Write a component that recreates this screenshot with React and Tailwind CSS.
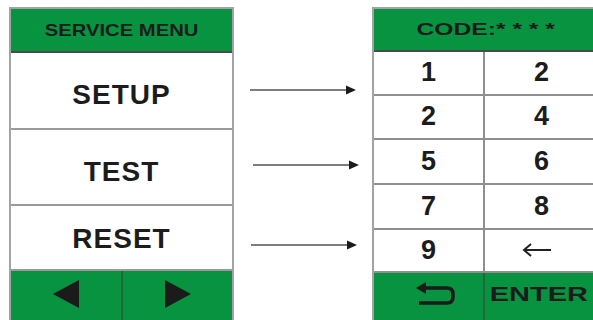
import React from 'react';

const GREEN = 'bg-[#07933f]';

// arrow from menu item to keypad
const Arrow = ({ className }) => (
    <svg width="108" height="10" viewBox="0 0 108 10" className={className}>
        <line x1="0" y1="5" x2="98" y2="5" stroke="#7d7d7d" strokeWidth="2" />
        <polygon points="96,0.5 106,5 96,9.5" fill="#1b1b1b" />
    </svg>
);

const MenuRow = ({ label, h, pad }) => (
    <div className={`flex items-center justify-center border-b-2 border-[#9a9a9a] ${h} ${pad}`}>
        <span className="text-[28px] font-bold tracking-[1px] text-[#1c1c1c] leading-none">{label}</span>
    </div>
);

const Key = ({ children, h, right }) => (
    <div className={`flex items-center justify-center border-b-2 border-[#8f8f8f] ${h} ${right ? '' : 'border-r-2'}`}>
        {children}
    </div>
);

const Digit = ({ n }) => (
    <span className="text-[27px] font-bold text-[#1c1c1c] leading-none">{n}</span>
);

export default function App() {
    const rows = [
        ['1', '2', 'h-[44px]'],
        ['2', '4', 'h-[44px]'],
        ['5', '6', 'h-[45px]'],
        ['7', '8', 'h-[45px]'],
    ];

    return (
        <div className="w-[593px] h-[320px] overflow-hidden bg-white flex font-['Liberation_Sans',Arial,sans-serif]">
            {/* --- LEFT: SERVICE MENU --- */}
            <div className="ml-[9px] mt-[7px] w-[225px] shrink-0 flex flex-col border-2 border-b-0 border-[#a3a3a3]">
                <div className={`${GREEN} h-[45px] flex items-center justify-center border-b-2 border-[#4a4a4a]`}>
                    <span className="inline-block scale-x-[1.19] text-[17px] font-bold text-[#1c1c1c] leading-none">SERVICE MENU</span>
                </div>
                <MenuRow label="SETUP" h="h-[78px]" pad="pt-[9px]" />
                <MenuRow label="TEST" h="h-[76px]" pad="pt-[11px]" />
                <MenuRow label="RESET" h="h-[66px]" pad="pt-[4px]" />
                <div className={`${GREEN} h-[50px] grid grid-cols-[112px_1fr]`}>
                    <div className="flex items-center justify-center border-r-2 border-[#22673a] pb-[2px]">
                        <svg width="26" height="28" viewBox="0 0 26 28"><polygon points="0,14 26,0 26,28" fill="#1b1b1b" /></svg>
                    </div>
                    <div className="flex items-center justify-center pb-[2px]">
                        <svg width="26" height="28" viewBox="0 0 26 28"><polygon points="0,0 26,14 0,28" fill="#1b1b1b" /></svg>
                    </div>
                </div>
            </div>

            {/* --- MIDDLE: arrows --- */}
            <div className="w-[138px] shrink-0 flex flex-col pl-[16px]">
                <Arrow className="mt-[85px]" />
                <Arrow className="mt-[65px] ml-[3px]" />
                <Arrow className="mt-[70px] ml-[1px]" />
            </div>

            {/* --- RIGHT: CODE keypad --- */}
            <div className="mt-[7px] w-[226px] shrink-0 flex flex-col border-l-2 border-t-2 border-[#a3a3a3]">
                <div className={`${GREEN} h-[45px] flex items-center justify-center border-b-2 border-[#4a4a4a]`}>
                    <span className="inline-block scale-x-[1.45] text-[17px] font-bold text-[#1c1c1c] leading-none">CODE:* * * *</span>
                </div>
                {rows.map(([a, b, h]) => (
                    <div key={a + b} className="grid grid-cols-[111px_1fr]">
                        <Key h={h}><Digit n={a} /></Key>
                        <Key h={h} right><Digit n={b} /></Key>
                    </div>
                ))}
                <div className="grid grid-cols-[111px_1fr]">
                    <Key h="h-[43px]"><Digit n="9" /></Key>
                    <Key h="h-[43px]" right>
                        <svg width="30" height="14" viewBox="0 0 30 14" className="ml-[-10px]">
                            <line x1="2" y1="7" x2="29" y2="7" stroke="#222" strokeWidth="2" />
                            <polyline points="9,1 2,7 9,13" fill="none" stroke="#222" strokeWidth="2" />
                        </svg>
                    </Key>
                </div>
                <div className={`${GREEN} h-[50px] grid grid-cols-[111px_1fr]`}>
                    <div className="flex items-center justify-end pr-[28px] border-r-2 border-[#22673a] pb-[4px]">
                        <svg width="40" height="24" viewBox="0 0 40 24">
                            <polygon points="1,6 11,0 11,12" fill="#1b1b1b" />
                            <path d="M10 6 H32 Q38 6 38 12 V15 Q38 21 32 21 H4" fill="none" stroke="#1b1b1b" strokeWidth="3.5" />
                        </svg>
                    </div>
                    <div className="flex items-center justify-center pb-[4px] pr-[6px]">
                        <span className="inline-block scale-x-[1.45] text-[20px] font-bold text-[#1c1c1c] leading-none">ENTER</span>
                    </div>
                </div>
            </div>
        </div>
    );
}
